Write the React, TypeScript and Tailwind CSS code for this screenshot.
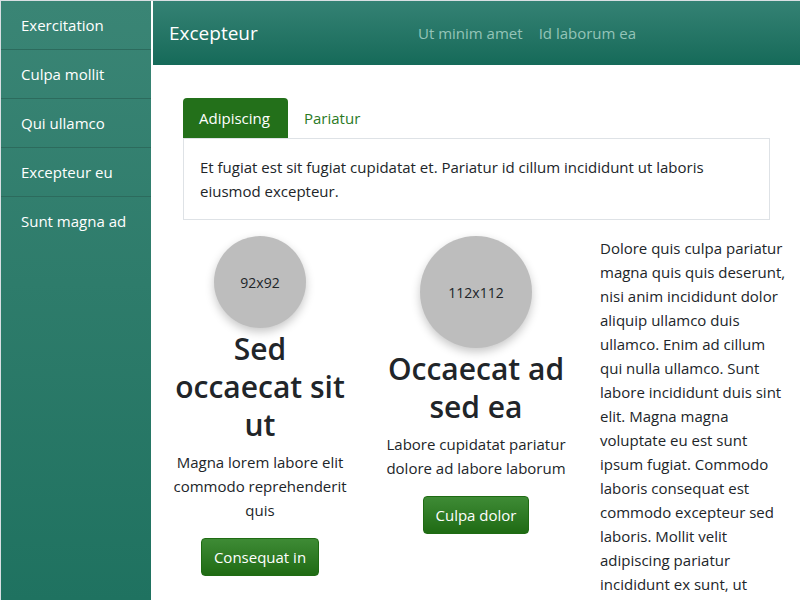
import React from "react";

const sideItems = [
  "Exercitation",
  "Culpa mollit",
  "Qui ullamco",
  "Excepteur eu",
  "Sunt magna ad",
];

function Feature({
  size,
  title,
  text,
  action,
}: {
  size: number;
  title: string;
  text: string;
  action: string;
}) {
  const circle = size === 92 ? "w-[92px] h-[92px]" : "w-[112px] h-[112px]";
  return (
    <div className="flex flex-col items-center text-center w-[180px] shrink-0">
      <div
        className={`${circle} rounded-full bg-[#bdbdbd] shadow-[0_4px_10px_rgba(0,0,0,0.22)] flex items-center justify-center text-[14px] text-[#212529]`}
      >
        {size}x{size}
      </div>
      <h2 className="mt-[2px] mb-[6px] text-[30px] leading-[38px] font-semibold text-[#212529]">
        {title}
      </h2>
      <p className="text-[15px] leading-6 text-[#212529]">{text}</p>
      <button className="mt-4 h-[38px] px-3 rounded bg-gradient-to-b from-[#3e8b35] to-[#1f6b13] text-white text-[15px] border border-[#1f6b13]">
        {action}
      </button>
    </div>
  );
}

export default function App() {
  return (
    <div
      className="flex h-[600px] overflow-hidden border-l border-t border-[#d9dfe3] bg-white"
      style={{ fontFamily: '"Open Sans", "Noto Sans", sans-serif' }}
    >
      <aside className="w-[150px] shrink-0 bg-gradient-to-b from-[#3a8575] to-[#1f7260]">
        {sideItems.map((item, i) => (
          <div
            key={item}
            className={`h-[49px] flex items-center px-5 text-[15px] text-white ${
              i < sideItems.length - 1 ? "border-b border-[#2c6b5d]" : ""
            }`}
          >
            {item}
          </div>
        ))}
      </aside>

      <main className="flex-1 ml-[2px] min-w-0">
        <header className="h-[64px] flex items-center px-4 bg-gradient-to-b from-[#348274] to-[#156a59]">
          <span className="text-[19px] text-white w-[249px]">Excepteur</span>
          <nav className="flex gap-4 text-[15px] text-[#94c4b8]">
            <span>Ut minim amet</span>
            <span>Id laborum ea</span>
          </nav>
        </header>

        <div className="px-[30px] pt-[33px]">
          <div className="flex">
            <div className="h-[40px] w-[105px] pl-4 flex items-center rounded-t bg-[#23701a] text-white text-[15px]">
              Adipiscing
            </div>
            <div className="h-[40px] px-4 flex items-center text-[#2a7a1f] text-[15px]">
              Pariatur
            </div>
          </div>
          <div className="border border-[#dee2e6] px-4 py-4 text-[15px] leading-6 text-[#212529]">
            Et fugiat est sit fugiat cupidatat et. Pariatur id cillum
            incididunt ut laboris eiusmod excepteur.
          </div>

          <div className="flex mt-4 -ml-[13px]">
            <Feature
              size={92}
              title="Sed occaecat sit ut"
              text="Magna lorem labore elit commodo reprehenderit quis"
              action="Consequat in"
            />
            <div className="ml-[36px]">
              <Feature
                size={112}
                title="Occaecat ad sed ea"
                text="Labore cupidatat pariatur dolore ad labore laborum"
                action="Culpa dolor"
              />
            </div>
            <p className="ml-[34px] w-[190px] shrink-0 text-[15px] leading-6 text-[#212529]">
              Dolore quis culpa pariatur magna quis quis deserunt, nisi anim
              incididunt dolor aliquip ullamco duis ullamco. Enim ad cillum qui
              nulla ullamco. Sunt labore incididunt duis sint elit. Magna magna
              voluptate eu est sunt ipsum fugiat. Commodo laboris consequat est
              commodo excepteur sed laboris. Mollit velit adipiscing pariatur
              incididunt ex sunt, ut
            </p>
          </div>
        </div>
      </main>
    </div>
  );
}
